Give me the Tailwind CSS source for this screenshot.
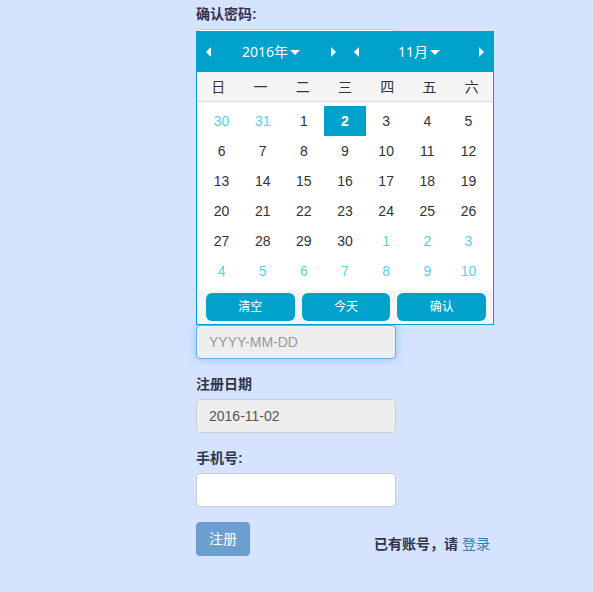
<!DOCTYPE html>
<html lang="zh-CN">
<head>
<meta charset="utf-8">
<meta name="viewport" content="width=device-width, initial-scale=1">
<title>注册</title>
<script src="https://cdn.jsdelivr.net/npm/@tailwindcss/browser@4"></script>
</head>
<body class="min-h-screen bg-[#d5e3ff] pl-49 font-['Liberation_Sans','Noto_Sans_CJK_SC',sans-serif] text-sm text-[#333]">
<form class="flex w-full max-w-[298px] flex-col pt-1">
  <div class="mb-[15px] flex flex-col gap-[5px]">
    <label for="confirm" class="h-5 font-bold leading-5 text-[#33334d]">确认密码:</label>
    <input id="confirm" type="password" class="h-[34px] w-[200px] rounded border border-[#ccc] bg-white px-3">
  </div>

  <div class="relative mt-[247px] mb-[15px] flex flex-col">
    <input id="birthday" type="text" readonly aria-label="日期" placeholder="YYYY-MM-DD" class="h-[34px] w-[200px] rounded border border-[#66afe9] bg-[#eee] px-3 text-[#555] shadow-[0_0_8px_rgba(102,175,233,0.6)] outline-none placeholder:text-[#999]">

    <!-- Date picker popup, opened above the date field -->
    <section aria-label="选择日期" class="absolute bottom-full left-0 w-full border border-[#00a1cb] bg-white">
      <header class="grid h-10 grid-cols-2 bg-[#00a1cb] font-['Noto_Sans','Noto_Sans_CJK_SC',sans-serif] text-white">
        <div class="flex items-center justify-between px-[9px]">
          <button type="button" aria-label="上一年"><svg class="h-[10px] w-[5px] fill-current" viewBox="0 0 5 10"><path d="M5 0v10L0 5z"/></svg></button>
          <div class="flex items-center gap-px">
            <select aria-label="年" class="appearance-none"><option>2016年</option></select>
            <svg class="h-[5px] w-[10px] fill-current" viewBox="0 0 10 5"><path d="M0 0h10L5 5z"/></svg>
          </div>
          <button type="button" aria-label="下一年"><svg class="h-[10px] w-[5px] fill-current" viewBox="0 0 5 10"><path d="M0 0v10l5-5z"/></svg></button>
        </div>
        <div class="flex items-center justify-between px-[9px]">
          <button type="button" aria-label="上个月"><svg class="h-[10px] w-[5px] fill-current" viewBox="0 0 5 10"><path d="M5 0v10L0 5z"/></svg></button>
          <div class="flex items-center gap-px">
            <select aria-label="月" class="appearance-none"><option>11月</option></select>
            <svg class="h-[5px] w-[10px] fill-current" viewBox="0 0 10 5"><path d="M0 0h10L5 5z"/></svg>
          </div>
          <button type="button" aria-label="下个月"><svg class="h-[10px] w-[5px] fill-current" viewBox="0 0 5 10"><path d="M0 0v10l5-5z"/></svg></button>
        </div>
      </header>
      <table class="block text-center leading-[30px]">
        <thead class="block border-b border-[#ddd] bg-[#f5f5f5]">
          <tr class="grid grid-cols-7 *:h-[29px] *:font-normal"><th>日</th><th>一</th><th>二</th><th>三</th><th>四</th><th>五</th><th>六</th></tr>
        </thead>
        <tbody class="block px-1 py-1 *:grid *:h-[30px] *:grid-cols-7">
          <tr><td class="text-[#5bcfec]">30</td><td class="text-[#5bcfec]">31</td><td>1</td><td class="bg-[#00a1cb] font-bold text-white">2</td><td>3</td><td>4</td><td>5</td></tr>
          <tr><td>6</td><td>7</td><td>8</td><td>9</td><td>10</td><td>11</td><td>12</td></tr>
          <tr><td>13</td><td>14</td><td>15</td><td>16</td><td>17</td><td>18</td><td>19</td></tr>
          <tr><td>20</td><td>21</td><td>22</td><td>23</td><td>24</td><td>25</td><td>26</td></tr>
          <tr><td>27</td><td>28</td><td>29</td><td>30</td><td class="text-[#5bcfec]">1</td><td class="text-[#5bcfec]">2</td><td class="text-[#5bcfec]">3</td></tr>
          <tr class="text-[#5bcfec]"><td>4</td><td>5</td><td>6</td><td>7</td><td>8</td><td>9</td><td>10</td></tr>
        </tbody>
      </table>
      <footer class="grid grid-cols-3 gap-[7px] bg-[#f5f5f5] py-[3px] pr-[7px] pl-[9px] text-xs text-white *:h-7 *:rounded-md *:bg-[#00a1cb]">
        <button type="button">清空</button>
        <button type="button">今天</button>
        <button type="button">确认</button>
      </footer>
    </section>
  </div>

  <div class="mb-[15px] flex flex-col gap-[5px]">
    <label for="regdate" class="h-5 font-bold leading-5 text-[#33334d]">注册日期</label>
    <input id="regdate" type="text" readonly value="2016-11-02" class="h-[34px] w-[200px] rounded border border-[#ccc] bg-[#eee] px-3 text-[#555]">
  </div>
  <div class="mb-[15px] flex flex-col gap-[5px]">
    <label for="phone" class="h-5 font-bold leading-5 text-[#33334d]">手机号:</label>
    <input id="phone" type="tel" class="h-[34px] w-[200px] rounded border border-[#ccc] bg-white px-3">
  </div>
  <div class="flex items-end justify-between">
    <button type="submit" class="h-[34px] rounded border border-[#6699cc] bg-[#6c9fd0] px-3 text-white">注册</button>
    <p class="pr-1 leading-6"><strong class="text-[#33334d]">已有账号，请</strong> <a href="#" class="text-[#337ab7]">登录</a></p>
  </div>
</form>
</body>
</html>
